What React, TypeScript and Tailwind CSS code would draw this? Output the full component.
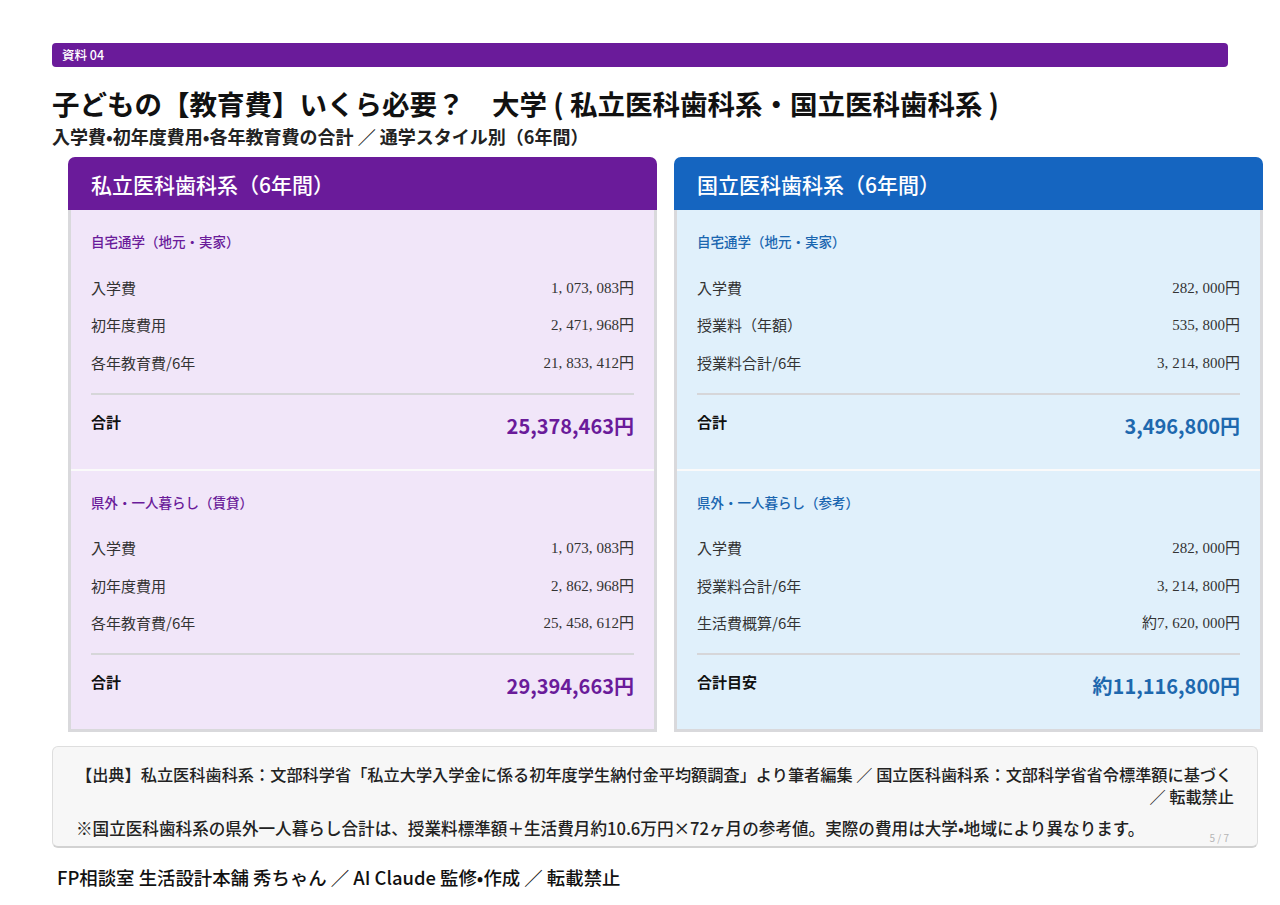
import React from "react";

type Row = { label: string; value: string };
type Section = { title: string; rows: Row[]; totalLabel: string; total: string };
type Card = {
  title: string;
  headerBg: string;
  bodyBg: string;
  accent: string;
  totalColor: string;
  sections: Section[];
};

const cards: Card[] = [
  {
    title: "私立医科歯科系（6年間）",
    headerBg: "bg-[#6a1b9a]",
    bodyBg: "bg-[#f1e6f9]",
    accent: "text-[#6a1b9a]",
    totalColor: "text-[#6a1b9a]",
    sections: [
      {
        title: "自宅通学（地元・実家）",
        rows: [
          { label: "入学費", value: "1,073,083円" },
          { label: "初年度費用", value: "2,471,968円" },
          { label: "各年教育費/6年", value: "21,833,412円" },
        ],
        totalLabel: "合計",
        total: "25,378,463円",
      },
      {
        title: "県外・一人暮らし（賃貸）",
        rows: [
          { label: "入学費", value: "1,073,083円" },
          { label: "初年度費用", value: "2,862,968円" },
          { label: "各年教育費/6年", value: "25,458,612円" },
        ],
        totalLabel: "合計",
        total: "29,394,663円",
      },
    ],
  },
  {
    title: "国立医科歯科系（6年間）",
    headerBg: "bg-[#1565c0]",
    bodyBg: "bg-[#e0f0fb]",
    accent: "text-[#1a66b0]",
    totalColor: "text-[#1e68ae]",
    sections: [
      {
        title: "自宅通学（地元・実家）",
        rows: [
          { label: "入学費", value: "282,000円" },
          { label: "授業料（年額）", value: "535,800円" },
          { label: "授業料合計/6年", value: "3,214,800円" },
        ],
        totalLabel: "合計",
        total: "3,496,800円",
      },
      {
        title: "県外・一人暮らし（参考）",
        rows: [
          { label: "入学費", value: "282,000円" },
          { label: "授業料合計/6年", value: "3,214,800円" },
          { label: "生活費概算/6年", value: "約7,620,000円" },
        ],
        totalLabel: "合計目安",
        total: "約11,116,800円",
      },
    ],
  },
];

const jp = { fontFamily: '"Noto Sans CJK JP", "Noto Sans", sans-serif' };
const serifNum = { fontFamily: '"Liberation Serif", "Noto Sans CJK JP", serif' };

function Value({ v }: { v: string }) {
  const parts = v.split(",");
  return (
    <span style={serifNum} className="text-[15px] text-[#333] leading-[20px]">
      {parts.map((p, i) => (
        <React.Fragment key={i}>
          {p}
          {i < parts.length - 1 && <span className="mr-[4px]">,</span>}
        </React.Fragment>
      ))}
    </span>
  );
}

function SectionBlock({ s, card, first }: { s: Section; card: Card; first: boolean }) {
  return (
    <div className={`px-5 pt-[22px] pb-[28px] ${first ? "" : "border-t-2 border-[#fafafa]"}`}>
      <div className={`h-[18px] text-[13.5px] leading-[18px] font-medium ${card.accent}`}>{s.title}</div>
      <div className="mt-[19px]">
        {s.rows.map((r, i) => (
          <div key={i} className="h-[37.5px] flex items-center justify-between">
            <span className="text-[15px] text-[#333] leading-[20px]">{r.label}</span>
            <Value v={r.value} />
          </div>
        ))}
      </div>
      <div className="mt-[11px] h-[2px] bg-[#d6d6d9]" />
      <div className="mt-[16px] flex items-start justify-between">
        <span className="text-[15px] leading-[22px] font-bold text-[#111]">{s.totalLabel}</span>
        <span className={`text-[20px] leading-[30px] font-bold ${card.totalColor}`}>{s.total}</span>
      </div>
    </div>
  );
}

function CardView({ card }: { card: Card }) {
  return (
    <div className="w-[589px] flex flex-col">
      <div className={`${card.headerBg} h-[53px] rounded-t-[7px] flex items-center pl-[23px]`}>
        <span className="text-white text-[21px] font-medium leading-[28px]">{card.title}</span>
      </div>
      <div className={`${card.bodyBg} border-x-[3px] border-b-[3px] border-[#d9d9dc]`}>
        {card.sections.map((s, i) => (
          <SectionBlock key={i} s={s} card={card} first={i === 0} />
        ))}
      </div>
    </div>
  );
}

export default function App() {
  return (
    <div style={jp} className="w-[1280px] h-[905px] bg-white overflow-hidden pt-[43px]">
      <div className="mx-[52px] h-[24px] bg-[#6a1b9a] rounded-[4px] flex items-center pl-[10px]">
        <span className="text-white text-[12.5px] font-medium leading-[16px]">資料 04</span>
      </div>
      <div className="ml-[52px] mt-[18px] text-[27.5px] leading-[36px] font-bold text-[#111] whitespace-nowrap">
        子どもの【教育費】いくら必要？　大学 ( 私立医科歯科系・国立医科歯科系 )
      </div>
      <div className="ml-[52px] mt-[4px] text-[18px] leading-[22px] font-bold text-[#222] whitespace-nowrap">
        入学費•初年度費用•各年教育費の合計 ／ 通学スタイル別（6年間）
      </div>
      <div className="ml-[68px] mt-[10px] flex gap-[17px]">
        {cards.map((c, i) => (
          <CardView key={i} card={c} />
        ))}
      </div>
      <div className="relative ml-[52px] mt-[14px] w-[1206px] bg-[#f7f7f7] border border-[#dedede] border-b-2 border-b-[#d2d2d2] rounded-[6px] px-[23px] pt-[16px] pb-[7px] leading-[22px] font-medium text-[#222]">
        <div className="whitespace-nowrap text-[16.2px]">
          【出典】私立医科歯科系：文部科学省「私立大学入学金に係る初年度学生納付金平均額調査」より筆者編集 ／ 国立医科歯科系：文部科学省省令標準額に基づく
        </div>
        <div className="text-right text-[16.2px]">／ 転載禁止</div>
        <div className="mt-[10px] whitespace-nowrap text-[16.6px]">
          ※国立医科歯科系の県外一人暮らし合計は、授業料標準額＋生活費月約10.6万円×72ヶ月の参考値。実際の費用は大学•地域により異なります。
        </div>
        <span className="absolute right-[28px] bottom-[2px] text-[10px] leading-[12px] text-[#b5b5b5] font-normal">5 / 7</span>
      </div>
      <div className="ml-[57px] mt-[17px] text-[18.4px] leading-[24px] font-medium text-[#111] whitespace-nowrap">
        FP相談室 生活設計本舗 秀ちゃん ／ AI Claude 監修•作成 ／ 転載禁止
      </div>
    </div>
  );
}
